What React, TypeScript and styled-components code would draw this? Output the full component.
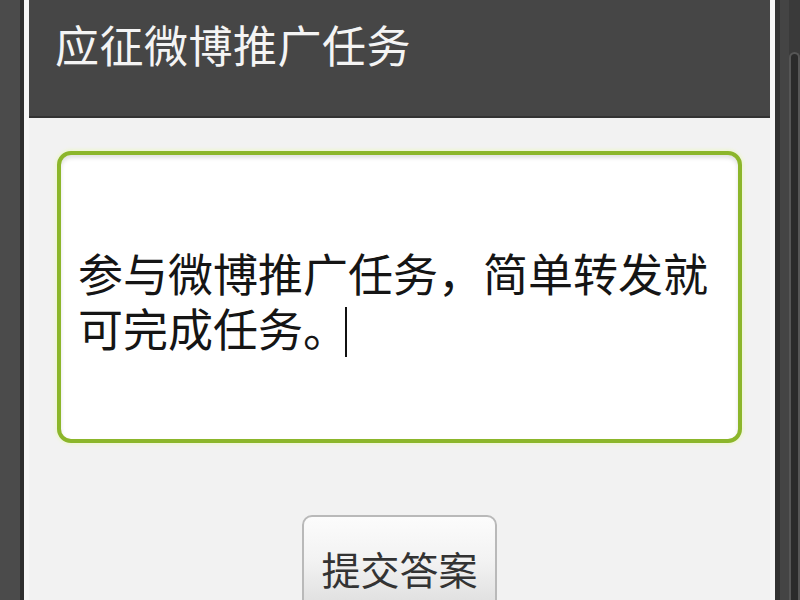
import styled, { createGlobalStyle } from "styled-components";

const GlobalStyle = createGlobalStyle`
  html, body {
    margin: 0;
    padding: 0;
    background: #464646;
  }
  body {
    font-family: "Noto Sans CJK SC", "Noto Sans", sans-serif;
  }
`;

const Frame = styled("div")({
  display: "flex",
  height: "600px",
  width: "800px",
  overflow: "hidden",
});

const LeftRail = styled("div")({
  width: "20px",
  background: "#4b4b4b",
  borderRight: "4px solid #2f2f2f",
  flexShrink: 0,
});

const Window = styled("div")({
  flex: 1,
  display: "flex",
  flexDirection: "column",
  borderLeft: "5px solid #f6f6f6",
  borderRight: "5px solid #f6f6f6",
  background: "#f2f2f2",
});

const Header = styled("div")({
  height: "118px",
  background: "#464646",
  borderBottom: "2px solid #333",
  padding: "14px 0 0 26px",
  boxSizing: "border-box",
  flexShrink: 0,
});

const Title = styled("h1")({
  margin: 0,
  fontSize: "44px",
  lineHeight: "60px",
  fontWeight: 400,
  color: "#f4f4f4",
  letterSpacing: "0.5px",
});

const Body = styled("div")({
  flex: 1,
  display: "flex",
  flexDirection: "column",
  alignItems: "center",
  padding: "33px 28px 0",
});

const InputBox = styled("div")({
  alignSelf: "stretch",
  height: "292px",
  boxSizing: "border-box",
  border: "4px solid #8cb62b",
  borderRadius: "14px",
  background: "#fff",
  boxShadow: "inset 0 3px 4px rgba(0,0,0,0.12), 0 0 3px 2px #eef5d6",
  display: "flex",
  flexDirection: "column",
  justifyContent: "center",
  padding: "6px 0 0 17px",
});

const InputLine = styled("div")({
  fontSize: "45px",
  lineHeight: "55px",
  height: "55px",
  color: "#151515",
  whiteSpace: "nowrap",
});

const Caret = styled("span")({
  display: "inline-block",
  width: "2px",
  height: "50px",
  background: "#111",
  verticalAlign: "-10px",
  marginLeft: "-3px",
});

const SubmitButton = styled("button")({
  marginTop: "72px",
  width: "195px",
  height: "104px",
  boxSizing: "border-box",
  border: "2px solid #b9b9b9",
  borderRadius: "10px",
  background: "linear-gradient(#fcfcfc, #f2f2f2 45%, #dadada)",
  fontFamily: "inherit",
  fontSize: "39px",
  lineHeight: "40px",
  color: "#333",
  padding: "31px 0 0",
  alignSelf: "center",
  alignItems: "flex-start",
  display: "flex",
  justifyContent: "center",
  flexShrink: 0,
});

const RightRail = styled("div")({
  width: "25px",
  flexShrink: 0,
  display: "flex",
  flexDirection: "column",
  padding: "52px 0 0 14px",
  boxSizing: "border-box",
  background: "linear-gradient(90deg, #333 0 5px, #444 5px 14px, #3a3a3a 14px)",
});

const ScrollThumb = styled("div")({
  flex: 1,
  background: "#2b2b2b",
  border: "2px solid #565656",
  borderBottom: "none",
  borderRadius: "8px 8px 0 0",
});

export default function App() {
  return (
    <>
      <GlobalStyle />
      <Frame>
        <LeftRail />
        <Window>
          <Header>
            <Title>应征微博推广任务</Title>
          </Header>
          <Body>
            <InputBox>
              <InputLine>参与微博推广任务，简单转发就</InputLine>
              <InputLine>
                可完成任务。
                <Caret />
              </InputLine>
            </InputBox>
            <SubmitButton>提交答案</SubmitButton>
          </Body>
        </Window>
        <RightRail>
          <ScrollThumb />
        </RightRail>
      </Frame>
    </>
  );
}
